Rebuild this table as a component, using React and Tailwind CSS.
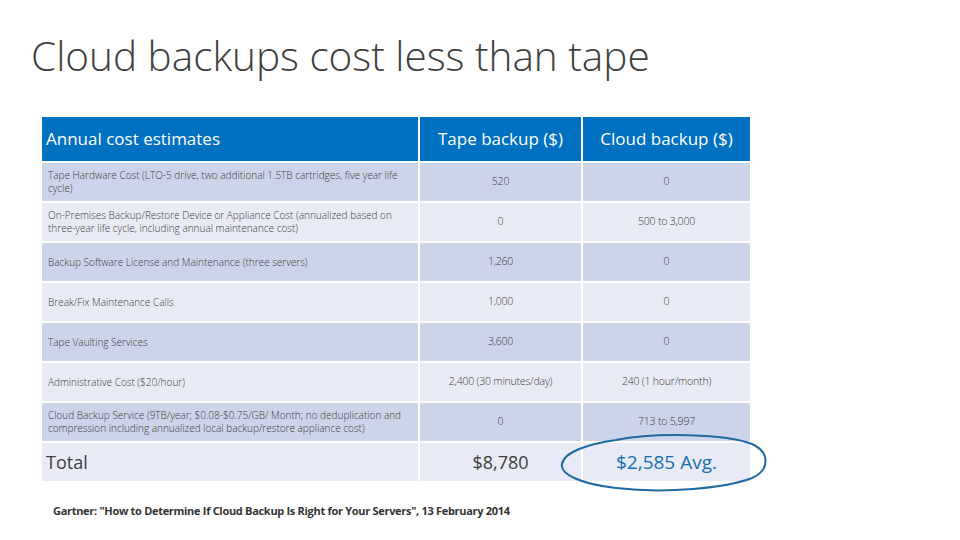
const rows = [
  { label: "Tape Hardware Cost (LTO-5 drive, two additional 1.5TB cartridges, five year life cycle)", tape: "520", cloud: "0" },
  { label: "On-Premises Backup/Restore Device or Appliance Cost (annualized based on three-year life cycle, including annual maintenance cost)", tape: "0", cloud: "500 to 3,000" },
  { label: "Backup Software License and Maintenance (three servers)", tape: "1,260", cloud: "0" },
  { label: "Break/Fix Maintenance Calls", tape: "1,000", cloud: "0" },
  { label: "Tape Vaulting Services", tape: "3,600", cloud: "0" },
  { label: "Administrative Cost ($20/hour)", tape: "2,400 (30 minutes/day)", cloud: "240 (1 hour/month)" },
  { label: "Cloud Backup Service (9TB/year; $0.08-$0.75/GB/ Month; no deduplication and compression including annualized local backup/restore appliance cost)", tape: "0", cloud: "713 to 5,997" },
];

const font = { fontFamily: '"Open Sans", "Noto Sans", "Liberation Sans", sans-serif' };

export default function App() {
  return (
    <div className="relative h-[540px] w-[960px] overflow-hidden bg-white text-[#404040]" style={font}>
      <h1 className="pl-[31px] pt-[30px] text-[40.5px] font-light leading-[52px] text-[#404040]">
        Cloud backups cost less than tape
      </h1>

      <div className="ml-[42px] mt-[35px] grid w-[708px] grid-cols-[376px_161px_167px] gap-[2px]">
        <div className="flex h-[44px] items-center bg-[#0070c0] pl-[4px] text-[17px] text-white">Annual cost estimates</div>
        <div className="flex h-[44px] items-center justify-center bg-[#0070c0] text-[17px] text-white">Tape backup ($)</div>
        <div className="flex h-[44px] items-center justify-center bg-[#0070c0] text-[17px] text-white">Cloud backup ($)</div>

        {rows.map((r, i) => {
          const bg = i % 2 === 0 ? "bg-[#cbd4e8]" : "bg-[#e8ebf5]";
          return [
            <div key={`l${i}`} className={`${bg} flex h-[38px] items-center pl-[6px] pr-[6px] text-[10px] font-light leading-[13px]`}>
              {r.label}
            </div>,
            <div key={`t${i}`} className={`${bg} flex h-[38px] items-center justify-center text-[10.5px] font-light tracking-[-0.2px]`}>{r.tape}</div>,
            <div key={`c${i}`} className={`${bg} flex h-[38px] items-center justify-center text-[10.5px] font-light tracking-[-0.2px]`}>{r.cloud}</div>,
          ];
        })}

        <div className="flex h-[38px] items-center bg-[#e8ebf5] pl-[4px] text-[18px]">Total</div>
        <div className="flex h-[38px] items-center justify-center bg-[#e8ebf5] text-[18px]">$8,780</div>
        <div className="flex h-[38px] items-center justify-center bg-[#e8ebf5] text-[19px] text-[#1470b4]">$2,585 Avg.</div>
      </div>

      <p className="ml-[53px] mt-[22px] text-[11px] font-bold tracking-[-0.3px] text-[#333]">
        Gartner: "How to Determine If Cloud Backup Is Right for Your Servers", 13 February 2014
      </p>

      <svg className="absolute left-[556px] top-[428px]" width="216" height="70" viewBox="0 0 216 70" fill="none">
        <path
          d="M60 12 C100 4 170 6 196 16 C214 24 214 42 196 50 C170 60 110 66 60 60 C24 56 4 46 6 36 C8 24 32 16 60 12 Z"
          stroke="#1f6aa3"
          strokeWidth="2"
        />
      </svg>
    </div>
  );
}
